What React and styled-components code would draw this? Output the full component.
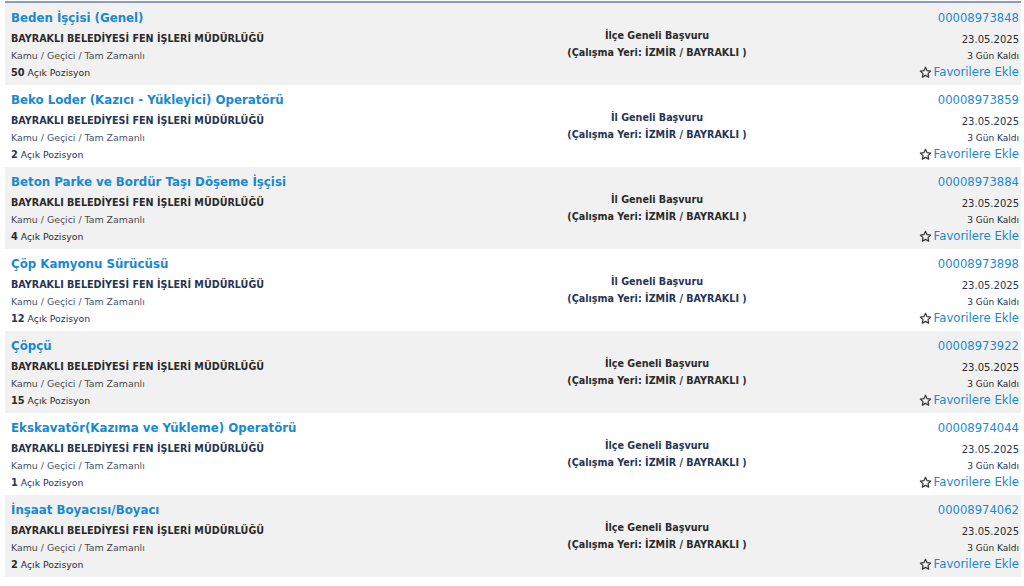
import React from "react";
import styled, {createGlobalStyle} from "styled-components";

const GlobalStyle = createGlobalStyle`
    html, body {
        margin: 0;
        padding: 0;
        background: #fff;
        font-family: "DejaVu Sans", Verdana, sans-serif;
    }
`

const List = styled.div`
    margin: 1px 3px 0 5px;
    border-top: 2px solid #8e9bb6;
`

const Row = styled.div`
    display: grid;
    grid-template-columns: 1fr 272px 226px;
    height: 82px;
    padding: 0 2px 0 6px;
    box-sizing: border-box;
    background: ${p => p.$shaded ? "#f1f1f1" : "#fff"};
    color: ${p => p.$shaded ? "#2b2b2b" : "#263552"};
`

const Left = styled.div`
    display: flex;
    flex-direction: column;
    padding-top: 6px;
`

const Title = styled.a`
    font-size: 11.8px;
    font-weight: bold;
    color: #1889d0;
    line-height: 18px;
    margin-bottom: 3px;
`

const Company = styled.div`
    font-size: 9.6px;
    font-weight: bold;
    line-height: 17px;
`

const Line = styled.div`
    font-size: 9.4px;
    line-height: 17px;
    opacity: 0.85;
`

const Count = styled.div`
    font-size: 9.3px;
    line-height: 18px;
    b {
        font-size: 9.8px;
    }
`

const Middle = styled.div`
    display: flex;
    flex-direction: column;
    align-items: center;
    padding-top: 24px;
    font-size: 9.6px;
    font-weight: bold;
    line-height: 17px;
`

const Right = styled.div`
    display: flex;
    flex-direction: column;
    align-items: flex-end;
    padding-top: 6px;
`

const Code = styled.a`
    font-size: 11.6px;
    color: #1889d0;
    line-height: 18px;
    margin-bottom: 3px;
`

const Small = styled.div`
    font-size: ${p => p.$size}px;
    line-height: 17px;
    margin-top: ${p => p.$shift || 0}px;
`

const Fav = styled.a`
    display: flex;
    align-items: center;
    gap: 2px;
    font-size: 11.7px;
    color: #1889d0;
    line-height: 16px;
    margin-top: -1px;
    svg {
        color: #333;
    }
`

const Star = () => (
    <svg width="13" height="13" viewBox="0 0 24 24" fill="none" stroke="currentColor" strokeWidth="2.2" strokeLinejoin="round">
        <path d="M12 2.5l2.9 6.1 6.6.8-4.9 4.6 1.3 6.6L12 17.3l-5.9 3.3 1.3-6.6-4.9-4.6 6.6-.8z"/>
    </svg>
)

const jobs = [
    {title: "Beden İşçisi (Genel)", count: 50, scope: "İlçe Geneli Başvuru", code: "00008973848"},
    {title: "Beko Loder (Kazıcı - Yükleyici) Operatörü", count: 2, scope: "İl Geneli Başvuru", code: "00008973859"},
    {title: "Beton Parke ve Bordür Taşı Döşeme İşçisi", count: 4, scope: "İl Geneli Başvuru", code: "00008973884"},
    {title: "Çöp Kamyonu Sürücüsü", count: 12, scope: "İl Geneli Başvuru", code: "00008973898"},
    {title: "Çöpçü", count: 15, scope: "İlçe Geneli Başvuru", code: "00008973922"},
    {title: "Ekskavatör(Kazıma ve Yükleme) Operatörü", count: 1, scope: "İlçe Geneli Başvuru", code: "00008974044"},
    {title: "İnşaat Boyacısı/Boyacı", count: 2, scope: "İlçe Geneli Başvuru", code: "00008974062"},
];

export default function App() {
    return (
        <>
            <GlobalStyle/>
            <List>
                {jobs.map((job, i) => (
                    <Row key={job.code} $shaded={i % 2 === 0}>
                        <Left>
                            <Title>{job.title}</Title>
                            <Company>BAYRAKLI BELEDİYESİ FEN İŞLERİ MÜDÜRLÜĞÜ</Company>
                            <Line>Kamu / Geçici / Tam Zamanlı</Line>
                            <Count><b>{job.count}</b> Açık Pozisyon</Count>
                        </Left>
                        <Middle>
                            <div>{job.scope}</div>
                            <div>(Çalışma Yeri: İZMİR / BAYRAKLI )</div>
                        </Middle>
                        <Right>
                            <Code>{job.code}</Code>
                            <Small $size={10} $shift={1}>23.05.2025</Small>
                            <Small $size={9}>3 Gün Kaldı</Small>
                            <Fav><Star/>Favorilere Ekle</Fav>
                        </Right>
                    </Row>
                ))}
            </List>
        </>
    );
}
